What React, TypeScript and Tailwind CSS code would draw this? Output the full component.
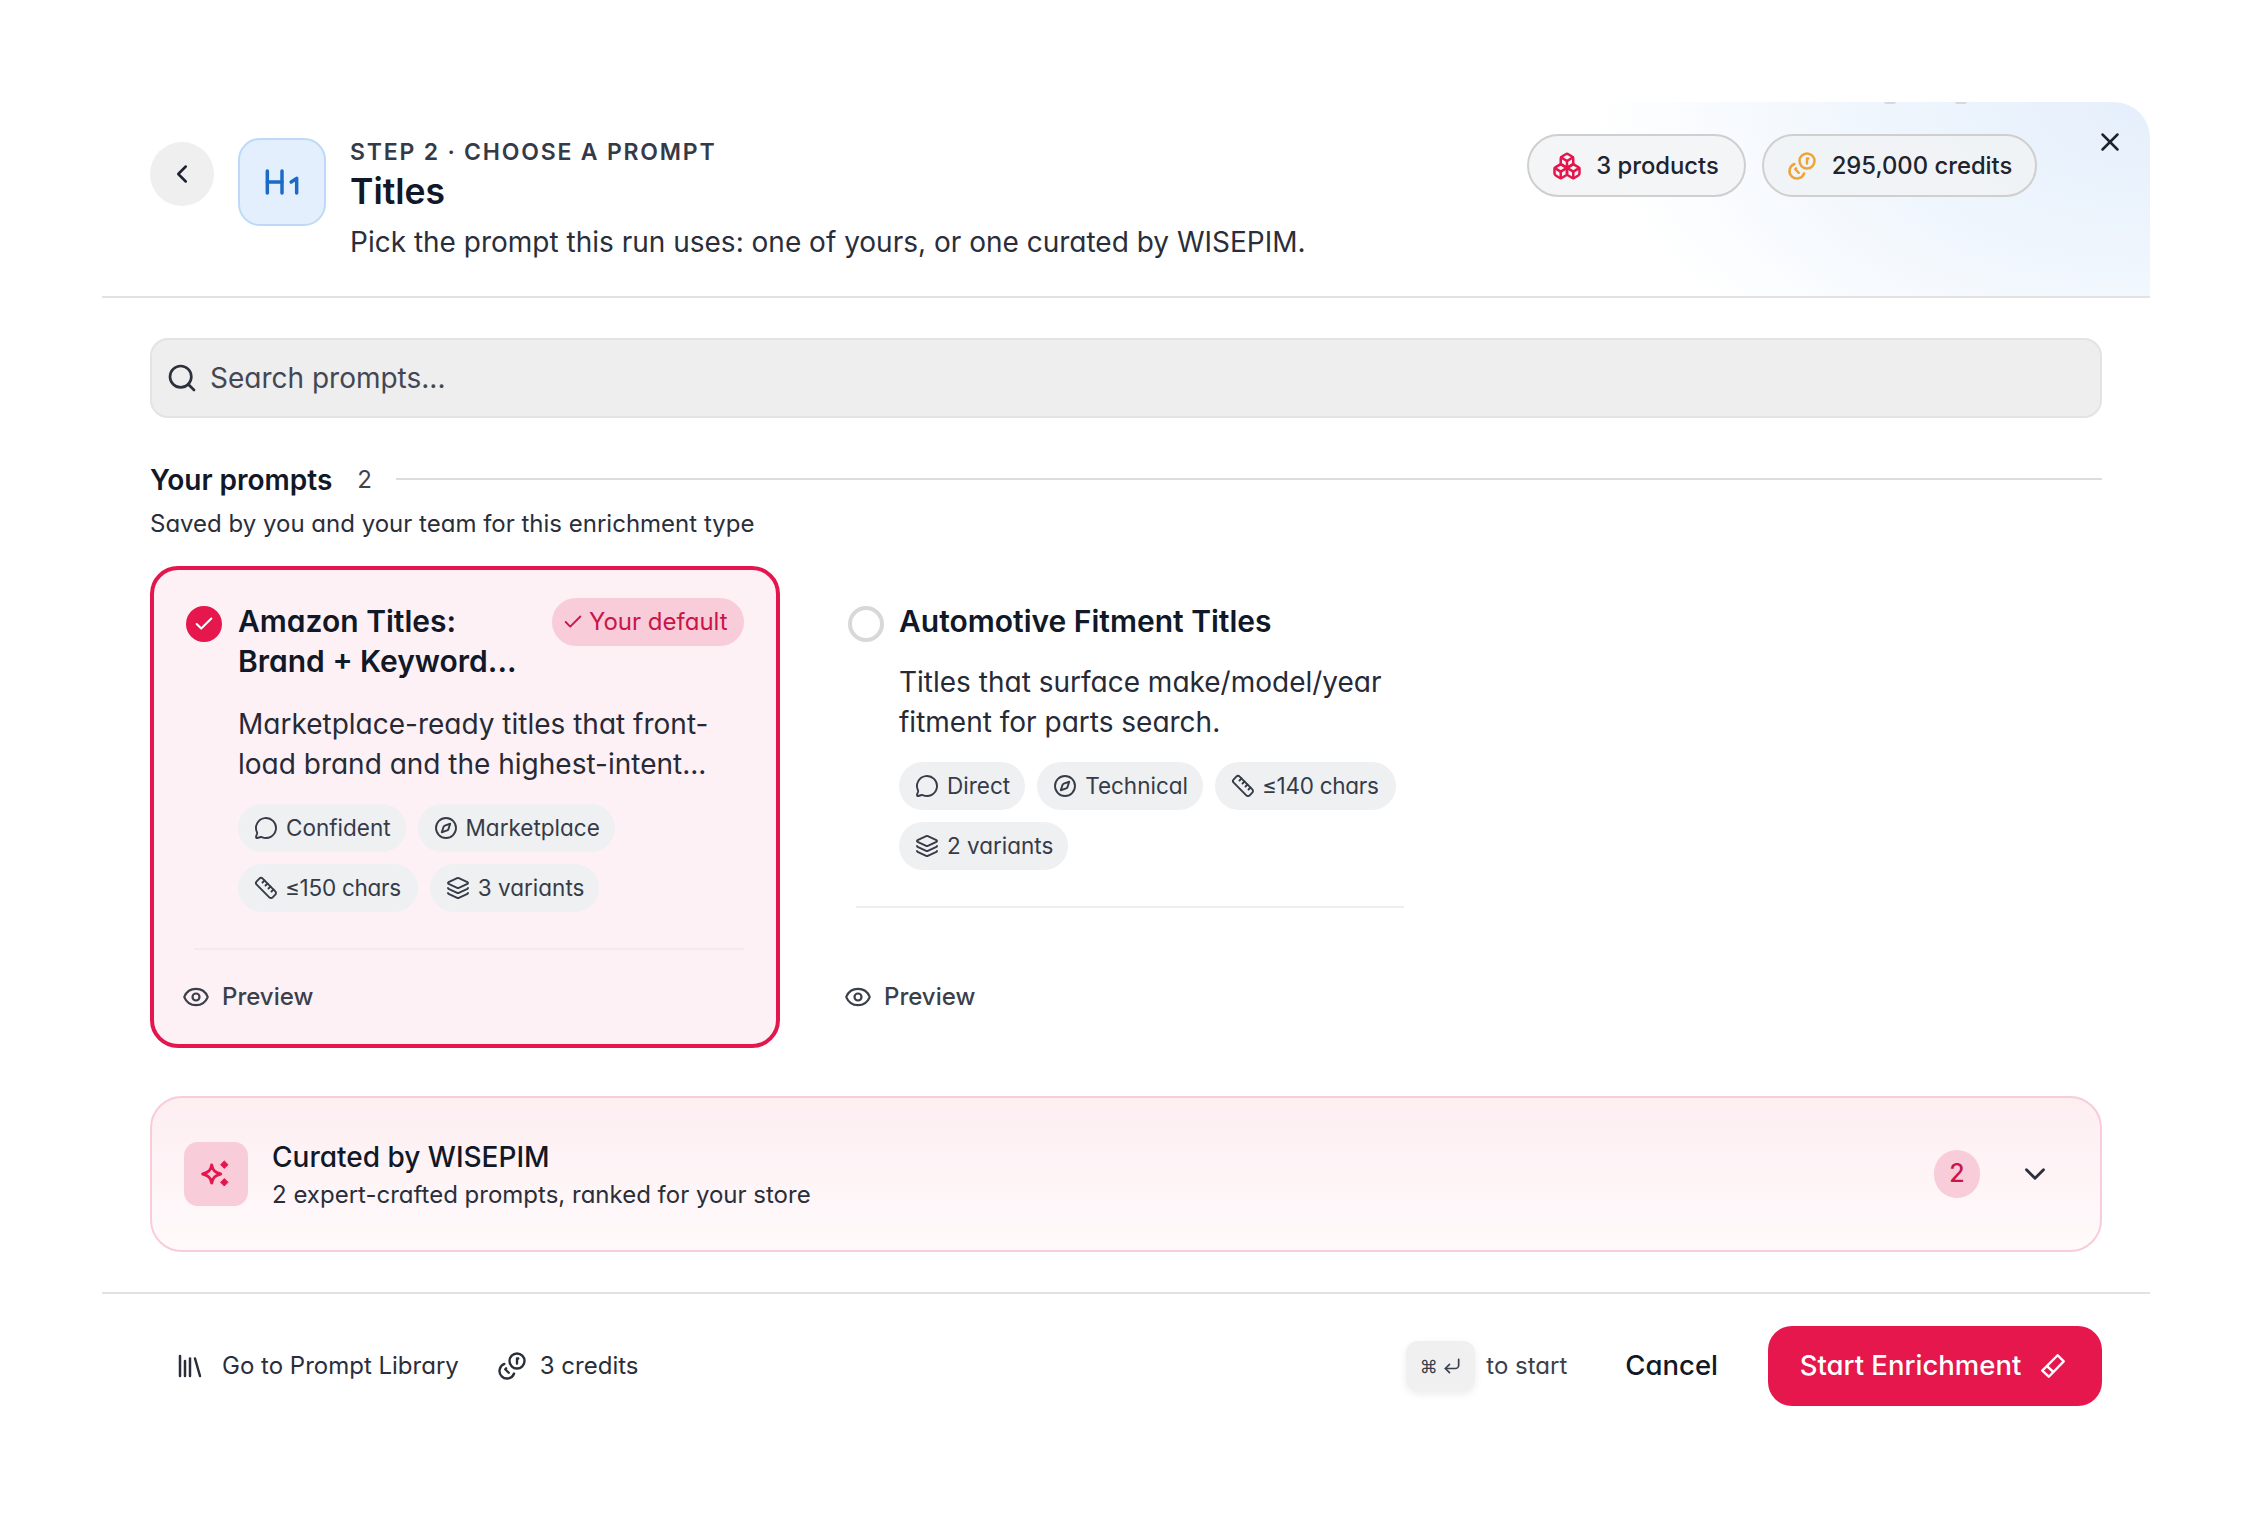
import React from "react";
import { ChevronLeft, ChevronDown, Heading1, X, Boxes, Coins, Search, Check, MessageCircle, Compass, Ruler, Layers, Eye, Library, CornerDownLeft } from "lucide-react";

function Pill({ icon: Icon, label, cls }: { icon: any; label: string; cls: string }) {
  return (
    <span className={cls}>
      <Icon size={24} strokeWidth={1.9} className="shrink-0" />
      {label}
    </span>
  );
}

const basePill = "flex h-[48px] items-center gap-[8px] rounded-full bg-[#eef0f2] pl-[16px] pr-[15px] text-[22.5px] text-[#363b48]";
const rulerPill = "flex h-[48px] items-center gap-[7px] rounded-full bg-[#eef0f2] pl-[16px] pr-[17px] text-[22.5px] tracking-[-0.012em] text-[#363b48]";

function Preview() {
  return (
    <div className="flex h-[92px] items-center gap-[12px] pb-[2px] pl-[28px] text-[24px] font-medium text-[#3a3f4c]">
      <Eye size={28} strokeWidth={1.9} />
      Preview
    </div>
  );
}

function Sparkle() {
  return (
    <svg width="34" height="34" viewBox="0 0 34 34" fill="none">
      <path d="M12.7 8 C13.5 13 15.5 15.5 21.7 17 C15.5 18.5 13.5 21 12.7 26 C11.9 21 9.9 18.5 3.7 17 C9.9 15.5 11.9 13 12.7 8Z" stroke="#e3174d" strokeWidth="3" strokeLinejoin="round" />
      <path d="M25.3 4 L29 7.7 L25.3 11.4 L21.6 7.7Z" fill="#e3174d" stroke="#e3174d" strokeWidth="1" strokeLinejoin="round" />
      <path d="M25.3 21.6 L29 25.3 L25.3 29 L21.6 25.3Z" fill="#e3174d" stroke="#e3174d" strokeWidth="1" strokeLinejoin="round" />
    </svg>
  );
}

function Rubber() {
  return (
    <svg width="28" height="28" viewBox="0 0 30 30" fill="none" stroke="white" strokeWidth="2.6" strokeLinejoin="round">
      <path d="M20 3.5 L26.5 10 L10.5 26.5 L3.5 20 Z" />
      <path d="M8.5 15 L15.5 21.5" />
    </svg>
  );
}

export default function App() {
  return (
    <div className="min-h-[1540px] bg-white pl-[102px] pt-[102px] text-[#111827] [font-family:Inter,sans-serif] [font-feature-settings:'cv11']">
      <div className="w-[2048px]">
        {/* Header */}
        <header className="relative flex h-[196px] overflow-hidden rounded-tr-[36px] border-b-2 border-[#e2e2e2] bg-[radial-gradient(ellipse_560px_330px_at_100%_0%,#e5effb_0%,#eef5fd_45%,#ffffff_100%)] pl-[48px] pr-[113px] pt-[36px]">
          <span className="absolute left-[1782px] top-[-3px] h-[5px] w-[12px] rounded-full bg-[#d6d8dc]" />
          <span className="absolute left-[1853px] top-[-3px] h-[5px] w-[12px] rounded-full bg-[#d6d8dc]" />
          <button className="mt-[4px] flex h-[64px] w-[64px] shrink-0 items-center justify-center rounded-full bg-[#efefef]">
            <ChevronLeft size={30} strokeWidth={2} className="text-[#1c2230]" />
          </button>
          <div className="ml-[24px] flex h-[88px] w-[88px] shrink-0 items-center justify-center rounded-[22px] border-2 border-[#bcdaf7] bg-[#e3effc]">
            <Heading1 size={44} strokeWidth={1.9} className="text-[#1a6ac6]" />
          </div>
          <div className="ml-[24px]">
            <div className="mt-[-1px] text-[23px] font-semibold leading-[30px] tracking-[0.078em] text-[#353a48]">STEP 2 · CHOOSE A PROMPT</div>
            <div className="mt-[3px] text-[35.5px] font-semibold leading-[44px] text-[#111827]">Titles</div>
            <div className="mt-[11px] text-[28px] leading-[34px] text-[#2a2e3a]">Pick the prompt this run uses: one of yours, or one curated by WISEPIM.</div>
          </div>
          <div className="ml-auto mt-[-4px] flex gap-[16px] self-start">
            <span className="flex h-[63px] w-[219px] items-center justify-center gap-[14px] rounded-full border-2 border-[#cfcfcf] bg-[#f3f4f5]/90 pr-[2px] text-[23.8px] font-medium text-[#20242f]">
              <Boxes size={30} strokeWidth={2} className="text-[#e3174d]" />
              3 products
            </span>
            <span className="flex h-[63px] w-[275px] items-center justify-center gap-[15px] rounded-full border-2 border-[#cfcfcf] bg-[#f1f3f5]/90 text-[23.8px] font-medium text-[#20242f]">
              <Coins size={30} strokeWidth={2} className="-scale-x-100 text-[#eda53a]" />
              295,000 credits
            </span>
          </div>
          <X size={30} strokeWidth={2} className="absolute right-[25px] top-[25px] text-[#1c2230]" />
        </header>

        {/* Body */}
        <main className="px-[48px] pt-[40px]">
          <div className="flex h-[80px] items-center gap-[12px] rounded-[18px] border-2 border-[#e3e3e3] bg-[#eeeeee] pl-[14px] text-[28px] text-[#434754]">
            <Search size={32} strokeWidth={2} className="text-[#2c303c]" />
            Search prompts...
          </div>

          <div className="mt-[45px] flex items-center">
            <span className="text-[28px] font-semibold leading-[34px] text-[#111827]">Your prompts</span>
            <span className="ml-[25px] text-[24px] leading-[34px] text-[#3f4350]">2</span>
            <span className="ml-[24px] mt-[-2px] h-[2px] flex-1 bg-[#dcdcdc]" />
          </div>
          <div className="mt-[10px] text-[24px] leading-[34px] text-[#2a2e3a]">Saved by you and your team for this enrichment type</div>

          <div className="mt-[25px] grid h-[482px] grid-cols-[630px_630px] gap-[32px]">
            {/* Selected card */}
            <div className="flex flex-col rounded-[28px] border-[4px] border-[#e3174d] bg-[#fdf1f6]">
              <div className="px-[32px] pb-[36px] pt-[31px]">
                <div className="flex items-start">
                  <span className="mt-[5px] flex h-[36px] w-[36px] shrink-0 items-center justify-center rounded-full bg-[#e5174c]">
                    <Check size={22} strokeWidth={2.2} className="text-white" />
                  </span>
                  <div className="ml-[16px] w-[290px] text-[30px] font-semibold leading-[40px] text-[#111827]">
                    Amazon Titles:
                    <br />
                    Brand + Keyword...
                  </div>
                  <span className="ml-auto mt-[-3px] flex h-[48px] w-[192px] shrink-0 items-center gap-[5px] rounded-full bg-[#f8ccd9] pl-[10px] text-[24px] text-[#c9154a]">
                    <Check size={22} strokeWidth={2} />
                    Your default
                  </span>
                </div>
                <div className="ml-[52px] mt-[23px] w-[500px] text-[28px] leading-[40px] text-[#262a36]">
                  Marketplace-ready titles that front-
                  <br />
                  load brand and the highest-intent...
                </div>
                <div className="ml-[52px] mt-[20px] flex flex-wrap gap-[12px]">
                  <Pill icon={MessageCircle} label="Confident" cls={basePill} />
                  <Pill icon={Compass} label="Marketplace" cls={basePill} />
                  <Pill icon={Ruler} label="≤150 chars" cls={rulerPill} />
                  <Pill icon={Layers} label="3 variants" cls={basePill} />
                </div>
              </div>
              <div className="ml-[40px] mr-[32px] h-[2px] bg-[#f3e9ef]" />
              <div className="mt-auto">
                <Preview />
              </div>
            </div>

            {/* Second card */}
            <div className="flex flex-col rounded-[28px] border-[4px] border-transparent">
              <div className="px-[32px] pb-[36px] pt-[31px]">
                <div className="flex items-start">
                  <span className="mt-[5px] h-[36px] w-[36px] shrink-0 rounded-full border-[4px] border-[#d8d8d8] bg-white" />
                  <div className="ml-[15px] text-[30px] font-semibold leading-[40px] text-[#111827]">Automotive Fitment Titles</div>
                </div>
                <div className="ml-[51px] mt-[20px] w-[500px] text-[28px] leading-[40px] text-[#262a36]">
                  Titles that surface make/model/year
                  <br />
                  fitment for parts search.
                </div>
                <div className="ml-[51px] mt-[20px] flex flex-wrap gap-[12px]">
                  <Pill icon={MessageCircle} label="Direct" cls={basePill} />
                  <Pill icon={Compass} label="Technical" cls={basePill} />
                  <Pill icon={Ruler} label="≤140 chars" cls={rulerPill} />
                  <Pill icon={Layers} label="2 variants" cls={basePill} />
                </div>
              </div>
              <div className="ml-[40px] mr-[34px] h-[2px] bg-[#eeeeee]" />
              <div className="mt-auto">
                <Preview />
              </div>
            </div>
          </div>

          {/* Curated */}
          <div className="mt-[48px] flex h-[156px] items-center rounded-[32px] border-2 border-[#f8ccd9] bg-gradient-to-b from-[#fdeef2] to-[#fffafb] pl-[32px] pr-[48px]">
            <span className="flex h-[64px] w-[64px] items-center justify-center rounded-[14px] bg-[#f9ccd9]">
              <Sparkle />
            </span>
            <div className="ml-[24px]">
              <div className="mt-[2px] text-[28px] font-medium leading-[36px] text-[#111827]">Curated by WISEPIM</div>
              <div className="mt-[4px] text-[24px] leading-[32px] text-[#2a2e3a]">2 expert-crafted prompts, ranked for your store</div>
            </div>
            <span className="ml-auto flex h-[48px] w-[46px] items-center justify-center rounded-full bg-[#f8ccd9] text-[25px] font-medium text-[#c9154a]">2</span>
            <ChevronDown size={34} strokeWidth={2} className="ml-[38px] text-[#2c303c]" />
          </div>
        </main>

        {/* Footer */}
        <footer className="mt-[40px] flex h-[146px] items-center border-t-2 border-[#e2e2e2] pl-[73px] pr-[48px]">
          <Library size={30} strokeWidth={2} className="text-[#2a2e3a]" />
          <span className="ml-[17px] text-[24px] text-[#2a2e3a]">Go to Prompt Library</span>
          <Coins size={30} strokeWidth={1.9} className="ml-[38px] -scale-x-100 text-[#2a2e3a]" />
          <span className="ml-[13px] text-[24px] text-[#2a2e3a]">3 credits</span>
          <span className="ml-auto flex h-[50px] w-[69px] items-center justify-center gap-[4px] rounded-[12px] bg-[#f0f0f0] text-[18px] text-[#3a3f4c] shadow-[0_3px_8px_rgba(0,0,0,0.08)]">
            ⌘
            <CornerDownLeft size={20} strokeWidth={2} />
          </span>
          <span className="ml-[11px] text-[24px] text-[#3a3f4c]">to start</span>
          <span className="ml-[58px] text-[27.5px] font-medium text-[#111827]">Cancel</span>
          <button className="ml-[50px] flex h-[80px] w-[334px] items-center justify-center gap-[18px] rounded-[24px] bg-[#e5174c] pr-[3px] text-[27.5px] font-medium text-white">
            Start Enrichment
            <Rubber />
          </button>
        </footer>
      </div>
    </div>
  );
}
